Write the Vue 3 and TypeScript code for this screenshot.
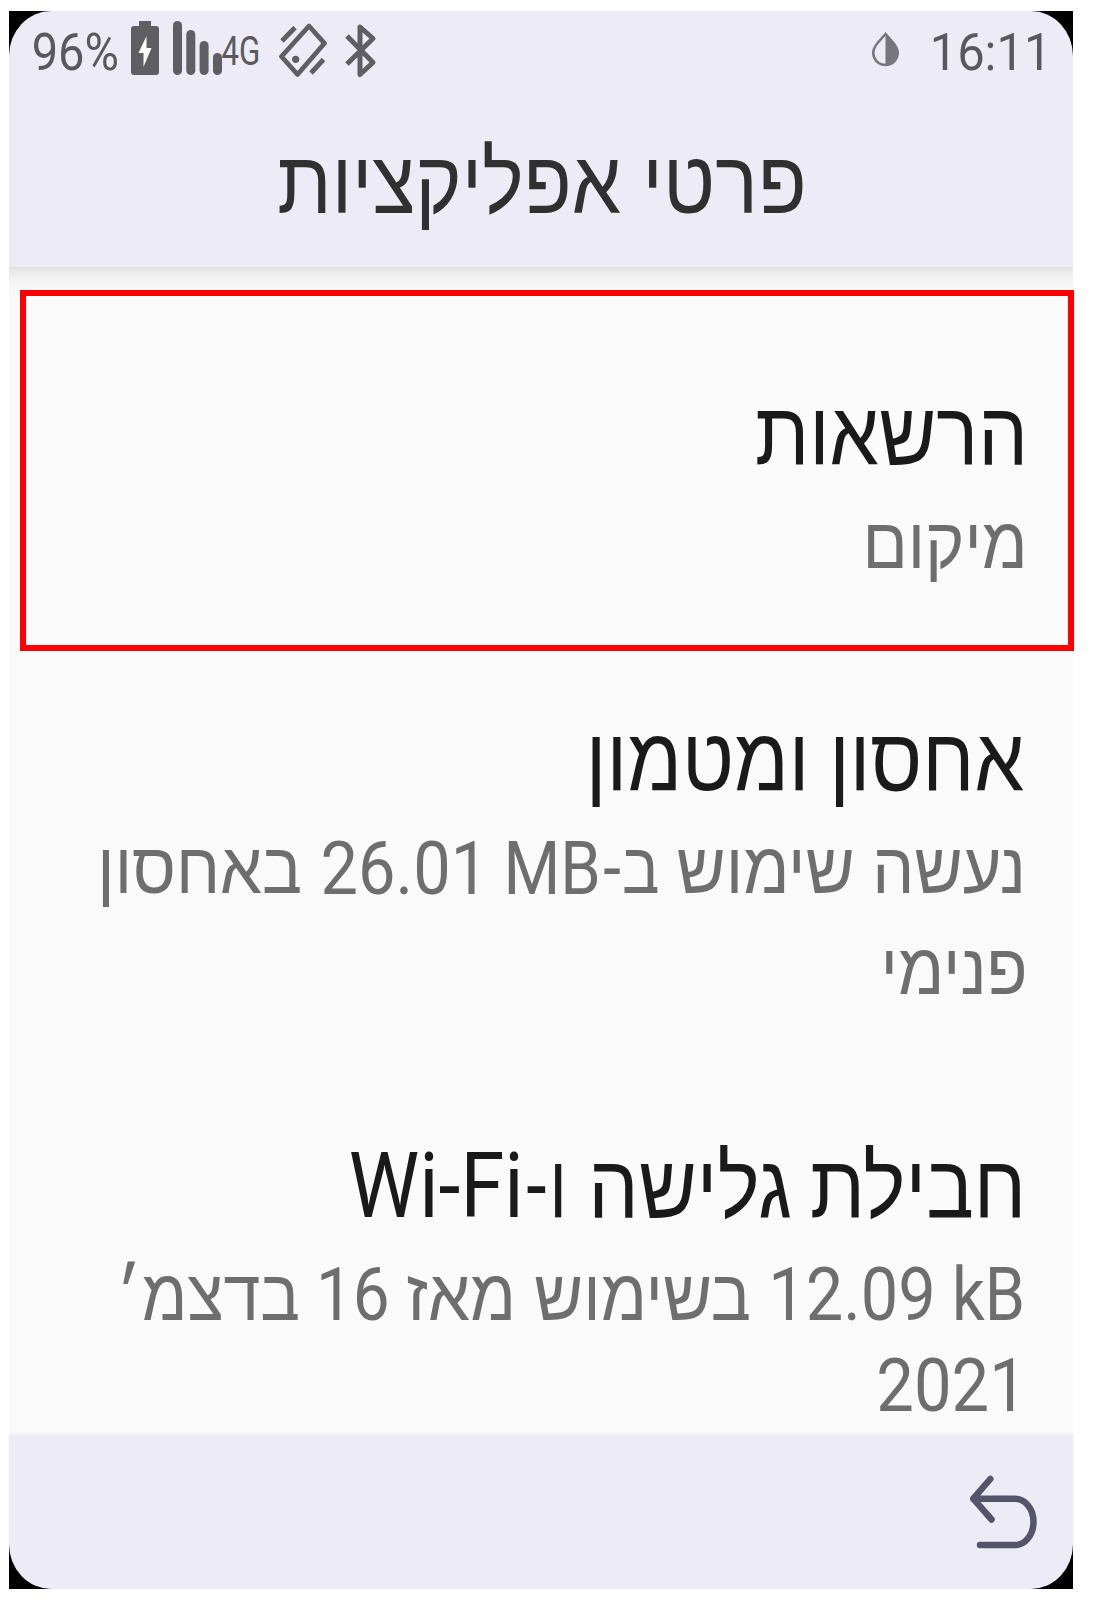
<script setup lang="ts">
interface Run {
  text: string
  /** Ink width of the run, px. */
  width: number
  /** Space before the run, px. */
  gap?: number
}
type Line = Run[]
interface Item {
  id: string
  title: Line
  summary: Line[]
}

const HEBREW = /[\u0590-\u05ff]/

const heading: Line = [
  { text: 'פרטי', width: 154.4 },
  { text: 'אפליקציות', width: 342.2, gap: 28.4 },
]

const items: Item[] = [
  {
    id: 'permissions',
    title: [{ text: 'הרשאות', width: 266.3, gap: 0.7 }],
    summary: [[{ text: 'מיקום', width: 154.7, gap: 0.3 }]],
  },
  {
    id: 'storage',
    title: [
      { text: 'אחסון', width: 188.7, gap: -1 },
      { text: 'ומטמון', width: 211.8, gap: 31.9 },
    ],
    summary: [
      [
        { text: 'נעשה', width: 144.5, gap: 2.4 },
        { text: 'שימוש', width: 174.3, gap: 23.8 },
        { text: 'ב', width: 34.3, gap: 20.1 },
        { text: '-', width: 16, gap: 3.1 },
        { text: 'MB', width: 89.4, gap: 6.1 },
        { text: '26.01', width: 152, gap: 34.7 },
        { text: 'באחסון', width: 198.3, gap: 21.3 },
      ],
      [{ text: 'פנימי', width: 138.7, gap: -1 }],
    ],
  },
  {
    id: 'data',
    title: [
      { text: 'חבילת', width: 208.6, gap: 3.1 },
      { text: 'גלישה', width: 197.3, gap: 21.3 },
      { text: 'ו', width: 7.5, gap: 30.7 },
      { text: '-', width: 18.4, gap: 8.5 },
      { text: 'Wi-Fi', width: 169.2, gap: 8 },
    ],
    summary: [
      [
        { text: 'kB', width: 66.1, gap: 1.2 },
        { text: '12.09', width: 158.1, gap: 24.6 },
        { text: 'בשימוש', width: 214.7, gap: 23.6 },
        { text: 'מאז', width: 103.4, gap: 24 },
        { text: '16', width: 65.6, gap: 21 },
        { text: 'בדצמ׳', width: 176.3, gap: 21.7 },
      ],
      [{ text: '2021', width: 134.9, gap: 9.3 }],
    ],
  },
]

const pct: Run = { text: '96%', width: 83.7 }
const net: Run = { text: '4G', width: 36 }
const clock: Run = { text: '16:11', width: 108 }

const ctx = document.createElement('canvas').getContext('2d')!

const boxStyle = (run: Run) => ({
  width: `${run.width}px`,
  marginRight: `${run.gap ?? 0}px`,
})

// Narrows the glyphs so that the ink of the run fills its box exactly.
const fit = (run: Run, size: number) => {
  ctx.font = `1000px ${HEBREW.test(run.text) ? '"Liberation Sans"' : 'Roboto'}`
  const m = ctx.measureText(run.text)
  const k = size / 1000
  const ink = (m.actualBoundingBoxRight + m.actualBoundingBoxLeft) * k
  const bearing = (m.width - m.actualBoundingBoxRight) * k
  const scale = run.width / ink
  return {
    fontSize: `${size}px`,
    transform: `translateX(${(bearing * scale).toFixed(2)}px) scaleX(${scale.toFixed(4)})`,
  }
}

const titleSize = (run: Run) => (HEBREW.test(run.text) ? 89 : 90)
const summarySize = (run: Run) => (HEBREW.test(run.text) ? 72.5 : 73.5)
</script>

<template>
  <div class="page">
    <div class="device">
      <div class="screen">
        <header class="top">
          <div class="status">
            <span class="run pct" :style="{ width: pct.width + 'px' }"><span :style="fit(pct, 52)">{{ pct.text }}</span></span>
            <svg class="battery" width="28" height="54" viewBox="0 0 28 54">
              <path d="M8 0h12v5h5a3 3 0 0 1 3 3v43a3 3 0 0 1-3 3H3a3 3 0 0 1-3-3V8a3 3 0 0 1 3-3h5z" fill="#5f5f63" />
              <path d="M15.500 15 7.500 32h5V46L20.500 27h-5z" fill="#fff" />
            </svg>
            <svg class="signal" width="50" height="54" viewBox="0 0 50 54" fill="#5f5f63">
              <rect x="0" y="0" width="9" height="54" rx="4.500" />
              <rect x="13.300" y="9" width="9" height="45" rx="4.500" />
              <rect x="26.600" y="20" width="9" height="34" rx="4.500" />
              <rect x="40" y="32" width="9" height="22" rx="4.500" />
            </svg>
            <span class="run net" :style="{ width: net.width + 'px' }"><span :style="fit(net, 41)">{{ net.text }}</span></span>
            <svg class="rotate" width="50" height="56" viewBox="0 0 50 56" fill="none" stroke="#5f5f63" stroke-width="4.800">
              <path d="M31 3 46.500 20.300 19.500 51.500 3.500 33.500z" stroke-linejoin="round" />
              <path d="M4 18 17 4.500M33 50 45.500 36.500" />
              <circle cx="17.700" cy="36.300" r="3.600" fill="#5f5f63" stroke="none" />
            </svg>
            <svg class="bt" width="32" height="56" viewBox="0 0 32 56" fill="none" stroke="#5f5f63" stroke-width="5">
              <path d="M2 13 28 39.500 15 51.500V4L28 15.500 2 41" stroke-linejoin="round" />
            </svg>
            <svg class="drop" width="27" height="35" viewBox="0 0 27 35">
              <path d="M13.500 2 6 10.500C-4 22 4 33 13.500 33S31 22 21 10.500z" fill="none" stroke="#77777b" stroke-width="2.600" />
              <path d="M13.500 2 21 10.500C31 22 23 33 13.500 33z" fill="#77777b" />
            </svg>
            <span class="run clock" :style="{ width: clock.width + 'px' }"><span :style="fit(clock, 52)">{{ clock.text }}</span></span>
          </div>
          <h1 class="heading">
            <span v-for="run in heading" :key="run.text" class="run" :style="boxStyle(run)"><span :style="fit(run, 88)">{{ run.text }}</span></span>
          </h1>
        </header>

        <main class="list">
          <section v-for="item in items" :key="item.id" :class="['item', item.id]">
            <div class="title">
              <span v-for="run in item.title" :key="run.text" class="run" :style="boxStyle(run)"><span :style="fit(run, titleSize(run))">{{ run.text }}</span></span>
            </div>
            <div class="summary">
              <div v-for="(line, i) in item.summary" :key="i" class="line">
                <span v-for="run in line" :key="run.text" class="run" :style="boxStyle(run)"><span :style="fit(run, summarySize(run))">{{ run.text }}</span></span>
              </div>
            </div>
          </section>
        </main>

        <footer class="nav">
          <svg width="70" height="76" viewBox="0 0 70 76" fill="none" stroke="#55546a" stroke-width="6.500" stroke-linecap="round" stroke-linejoin="round">
            <path d="M22.300 4 5.300 23.700 23.500 44.500M5.300 23.700H47a18.500 23.150 0 0 1 0 46.300H12" />
          </svg>
        </footer>
      </div>
    </div>
  </div>
</template>

<style>
body {
  margin: 0;
  background: #fff;
}
</style>

<style scoped>
.page {
  box-sizing: border-box;
  width: 1093px;
  height: 1606px;
  padding: 11px 20px 17px 9px;
  overflow: hidden;
  background: #fff;
  font-family: Roboto, 'Liberation Sans', sans-serif;
}
.device {
  height: 1578px;
  background: linear-gradient(#000 0 60px, #fafafa 60px 1500px, #000 1500px);
}
.screen {
  display: flex;
  flex-direction: column;
  height: 1578px;
}
.run {
  display: flex;
  flex: none;
  direction: rtl;
}
.run > span {
  flex: none;
  white-space: nowrap;
  transform-origin: right;
  unicode-bidi: isolate;
}
.top {
  height: 256px;
  background: #ecebf6;
  border-radius: 42px 42px 0 0 / 45px 45px 0 0;
}
.status {
  display: flex;
  align-items: flex-start;
  height: 80px;
  color: #59595d;
}
.pct,
.clock {
  line-height: 60px;
  margin-top: 12px;
}
.pct {
  margin-left: 25px;
  margin-right: 13.3px;
}
svg {
  display: block;
  flex: none;
}
.battery {
  margin-top: 10px;
}
.signal {
  margin: 10px 0 0 14px;
}
.net {
  margin: 10px 20.5px 0 -1.5px;
  line-height: 60px;
}
.rotate {
  margin-top: 12px;
}
.bt {
  margin: 12px 0 0 17px;
}
.drop {
  margin: 21px 35px 0 auto;
}
.clock {
  margin-right: 31.5px;
}
.heading,
.title,
.line {
  display: flex;
  direction: rtl;
}
.heading {
  margin: 0;
  padding-right: 269.6px;
  line-height: 183px;
  font-family: 'Liberation Sans', sans-serif;
  font-weight: 400;
  color: #303030;
}
.list {
  height: 1168px;
  box-sizing: border-box;
  padding-top: 23px;
  background: linear-gradient(#dedede, #e9e9e9 4px, #f3f3f3 12px, #fafafa 26px);
}
.item {
  box-sizing: border-box;
  padding-right: 50px;
}
.permissions {
  width: 1054px;
  height: 361px;
  margin-left: 11px;
  padding: 85px 45px 0 0;
  border: 6px solid #f00;
  background: #fafafa;
}
.storage {
  height: 427px;
  padding-top: 56px;
}
.data {
  padding-top: 56px;
}
.title {
  height: 105px;
  line-height: 106px;
  color: #1a1a1a;
}
.summary {
  margin-top: 7px;
  color: #6e6e6e;
}
.permissions .summary {
  margin-top: 8px;
}
.line {
  height: 101px;
  line-height: 100px;
}
.data .summary {
  margin-top: 11px;
}
.data .line {
  height: 91px;
  line-height: 91px;
}
.nav {
  display: flex;
  justify-content: flex-end;
  align-items: flex-start;
  box-sizing: border-box;
  height: 154px;
  padding: 40px 35px 0 0;
  background: #ecebf6;
  border-radius: 0 0 42px 42px / 0 0 45px 45px;
  box-shadow: 0 -1px 2px rgba(60, 60, 40, 0.08);
}
</style>
